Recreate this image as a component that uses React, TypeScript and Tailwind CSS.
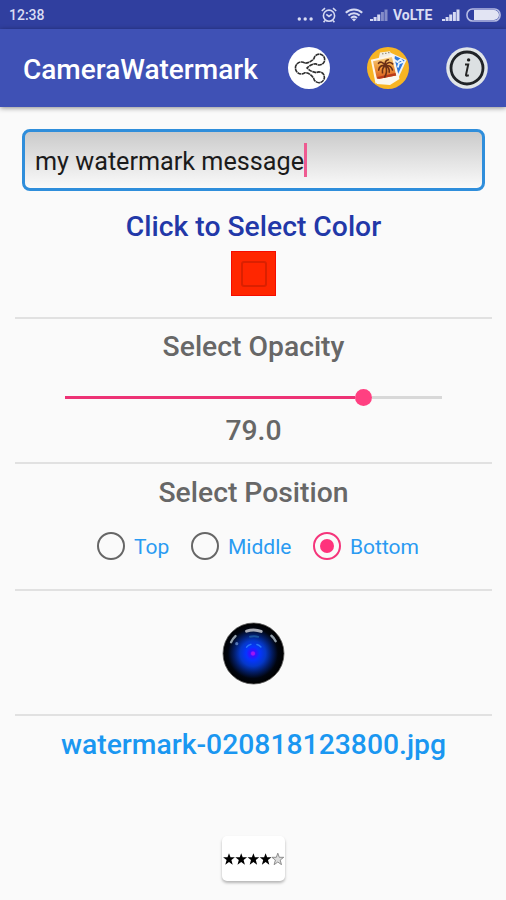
import React, { useState } from "react";

//Types
type Position = "Top" | "Middle" | "Bottom";

const positions: { name: Position; spacing: string }[] = [
  { name: "Top", spacing: "w-[94px]" },
  { name: "Middle", spacing: "w-[122px]" },
  { name: "Bottom", spacing: "w-[108px]" },
];

const STAR = "M5.5 -.2 7 3.9H11.4L7.9 6.7 9.2 11.3 5.5 8.6 1.8 11.3 3.1 6.7 -.4 3.9H4Z";

const SignalIcon = ({ weak }: { weak?: boolean }) => (
  <svg width="18" height="14" viewBox="0 0 18 14" fill="#d5d9f2">
    <path d="M0 11h3v2H0zM3.6 9h3v4h-3zM7.2 6.5h3V13h-3z" />
    <path d="M10.9 4h3v9h-3zM14.5 1.5h3V13h-3z" opacity={weak ? 0.5 : 1} />
  </svg>
);

const StatusBar = () => (
  <div className="flex h-[29px] items-center bg-[#303f9f] pt-px pr-[5px] pl-[9px] text-[#d9dcf3]">
    <span className="text-[14px] font-medium">12:38</span>
    <svg className="mt-[7px] ml-auto" width="17" height="4" viewBox="0 0 17 4" fill="#d9dcf3">
      <circle cx="2.3" cy="2" r="1.7" />
      <circle cx="8.2" cy="2" r="1.7" />
      <circle cx="14.1" cy="2" r="1.7" />
    </svg>
    <svg className="ml-[7px]" width="16" height="16" viewBox="0 0 16 16" fill="none" stroke="#d5d9f2" strokeWidth="1.6">
      <circle cx="8" cy="8.7" r="5.6" />
      <path d="M.8 4 4 1.2M12 1.2 15.2 4M5.3 7.3 8 9.4l2.8-2.1M4 13.4l-1.4 1.8M12 13.4l1.4 1.8" />
    </svg>
    <svg className="ml-[8px]" width="18" height="14" viewBox="0 0 18 14" fill="none" stroke="#d5d9f2" strokeWidth="2">
      <path d="M.8 4.8C5.4.3 12.6.3 17.2 4.8M3.4 7.4c3.2-3 8-3 11.2 0M6 10c1.8-1.6 4.2-1.6 6 0" />
      <path d="M6.9 11.2 9 13.6l2.1-2.4c-1.2-1-3-1-4.2 0Z" fill="#d5d9f2" stroke="none" />
    </svg>
    <div className="ml-[7px]"><SignalIcon weak /></div>
    <span className="ml-[5px] w-[41px] text-[14px] font-bold">VoLTE</span>
    <div className="ml-[8px]"><SignalIcon /></div>
    <svg className="ml-[6px]" width="35" height="14" viewBox="0 0 35 14">
      <rect x="1" y="1" width="33" height="12" rx="5.5" fill="none" stroke="#b6bce3" strokeWidth="1.6" />
      <path d="M8 2h20a5 5 0 0 1 0 10H8Z" fill="#e2e4f3" />
    </svg>
  </div>
);

const ShareIcon = () => (
  <svg width="42" height="42" viewBox="0 0 42 42">
    <circle cx="21" cy="21" r="21" fill="#fff" />
    <path
      d="M17.2 16.3c3.6-.7 7-2.2 8.8-4.8a5.4 5.4 0 1 1 2 5.3c-3.4 0-6.6 1.7-9 4.2 2.8 2.5 5.7 4.3 9.3 4.6a5.4 5.4 0 1 1-2.6 5.7c-2.2-3.4-5-5.4-8.6-5.6a6 6 0 1 1 .1-9.4Z"
      fill="none" stroke="#2d2d2d" strokeWidth="1.6" strokeDasharray="4 .5"
    />
  </svg>
);

const GalleryIcon = () => (
  <svg width="42" height="42" viewBox="0 0 42 42">
    <defs>
      <linearGradient id="sunset" x1="0" y1="0" x2="0" y2="1">
        <stop offset="0" stopColor="#f6cf82" />
        <stop offset=".45" stopColor="#ef9b3d" />
        <stop offset="1" stopColor="#d9571f" />
      </linearGradient>
    </defs>
    <circle cx="21" cy="21" r="21" fill="#f7b524" />
    <path d="m22 5 17.5 8-9 20-17-8Z" fill="#eef2f8" />
    <path d="m28 9 9.5 4.2L30.6 28 23 25Z" fill="#2e78dc" />
    <path d="m27 12.5 3.5 2.5 3-2.5 2.5 2.6-4 1.3-1.2 4" fill="none" stroke="#e7f4ff" strokeWidth="1.8" />
    <path d="m13 5.5 10-1.2 2 8-14 2Z" fill="#f3eee3" />
    <path d="M15 6.8h1.5M18 6.3h1.5M21 5.7h1.5" stroke="#8b806c" />
    <path d="m3.8 12.7 22.8-5.3L32.2 31 8.5 36.5Z" fill="#fff5e6" />
    <path d="m6 14.3 18.9-4.4 4.3 18.5L10 32.3Z" fill="url(#sunset)" />
    <path d="m10.5 30 18-4 .7 2.4L10 32.3Z" fill="#b93a1a" />
    <path
      d="M18.7 19c1.3 3.7.9 7.7-1 11M18.5 18.5c-2.8-4-5.4-4-7-2.2M18.5 18.5c-4.2-.6-6.4 1-6.8 4.6M18.5 18.5c-2.6 1.8-3.6 4-3 7.3M18.5 18.5c-1-3.4.5-5.3 2.8-5.8M18.5 18.5c2.2-3.6 5-3.7 7.2-1.6M18.5 18.5c4-.4 6 .9 7 4.5M18.5 18.5c3.2 1.8 4.2 3.9 3.7 6.7"
      fill="none" stroke="#6b2f16" strokeWidth="1.6" strokeLinecap="round"
    />
    <path d="m8.5 31.5 6 .8 7-1.5 10-2 1 3.2-9.5 6-13-1Z" fill="#faf7ee" />
  </svg>
);

const InfoIcon = () => (
  <svg width="42" height="42" viewBox="0 0 42 42">
    <circle cx="21" cy="21" r="20.8" fill="#e1e5e8" />
    <circle cx="21" cy="21" r="16" fill="#dce0e2" stroke="#202327" strokeWidth="2.8" />
    <circle cx="22.6" cy="12.9" r="1.7" fill="#1c1c1c" />
    <path d="M19 17.6h3.2l-2.2 10.3q-.2 1.3 2.8.4" fill="none" stroke="#252525" strokeWidth="2" />
  </svg>
);

const LensIcon = () => (
  <svg width="63" height="63" viewBox="0 0 64 64">
    <defs>
      <radialGradient id="lens" cx=".49" cy=".5" r=".5">
        <stop offset="0" stopColor="#8b18ff" />
        <stop offset=".1" stopColor="#3510ff" />
        <stop offset=".22" stopColor="#0535ff" />
        <stop offset=".42" stopColor="#0538c8" />
        <stop offset=".63" stopColor="#031c62" />
        <stop offset=".82" stopColor="#01050f" />
        <stop offset="1" stopColor="#000" />
      </radialGradient>
    </defs>
    <circle cx="32" cy="32" r="31" fill="url(#lens)" stroke="#606060" strokeWidth=".8" />
    <g fill="none" strokeLinecap="round">
      <path d="M25 9.3c5-1.7 10-1.5 14.8 .3" stroke="#a9adb8" strokeWidth="3" />
      <path d="M9.2 20.5c1.2-2.6 2.6-4.5 4.5-6.2M50.2 14c2 1.6 3.3 3.4 4.3 5.5" stroke="#929faa" strokeWidth="2.4" />
      <path d="M28.5 15c2.8-.8 5.6-.7 8.2 .1" stroke="#1c559e" strokeWidth="2" />
      <path d="M25 25.5c1.2-1.6 2.6-2.4 4.3-2.8M35.5 22.8c1.8.5 3 1.3 4 2.6" stroke="#2977f7" strokeWidth="1.5" />
    </g>
    <circle cx="15" cy="22" r="1.6" fill="#5577b7" />
    <circle cx="31.5" cy="32" r="2" fill="#9f16f2" />
  </svg>
);

const Divider = () => <div className="h-[2px] w-full shrink-0 bg-[#e1e1e1]" />;

const App: React.FC = (): React.ReactElement => {

  const [position, setPosition] = useState<Position>("Bottom");
  const opacity = 79;

  return (
    <div className="flex h-[900px] w-[506px] flex-col overflow-hidden bg-[#fafafa] font-['Roboto',sans-serif]">
      <StatusBar />
      <header className="flex h-[78px] shrink-0 items-center bg-[#3f51b5] pr-[18px] pl-[23px] shadow-[0_1px_5px_rgba(0,0,0,0.45)]">
        <h1 className="mt-[3px] text-[28px] font-medium whitespace-nowrap text-white">CameraWatermark</h1>
        <div className="ml-auto flex gap-[37px]">
          <button><ShareIcon /></button>
          <button><GalleryIcon /></button>
          <button><InfoIcon /></button>
        </div>
      </header>

      <main className="flex flex-1 flex-col items-center pr-[14px] pl-[15px]">
        <div className="mt-[22px] flex h-[62px] w-[463px] shrink-0 items-center rounded-[8px] border-[3.5px] border-[#2f8edb] bg-linear-to-b from-[#cbcbcb] to-[#fafafa] pl-[10px]">
          <span className="mt-[3px] text-[25.2px] whitespace-nowrap text-[#1b1b1b]">my watermark message</span>
          <span className="h-[34px] w-[3px] bg-[#ee5b91]" />
        </div>

        <h2 className="mt-[18px] h-9 text-[28.3px] leading-9 font-medium text-[#2238a8]">Click to Select Color</h2>
        <button className="mt-[6px] flex size-[45px] shrink-0 items-center justify-center border border-[#f50c00] bg-[#ff2600]">
          <span className="size-[26px] rounded-[3px] border-2 border-[#db2000]" />
        </button>
        <div className="mt-[21px] w-full"><Divider /></div>

        <h2 className="mt-[10px] h-9 text-[28.3px] leading-9 font-medium text-[#676767]">Select Opacity</h2>
        <div className="mt-[20px] flex h-6 w-[377px] items-center">
          <div className="h-[3px] bg-[#ed3275]" style={{ width: `${opacity - 2.2}%` }} />
          <div className="size-[17px] shrink-0 rounded-full bg-[#ff4081]" />
          <div className="h-[3px] flex-1 bg-[#d8d8d8]" />
        </div>
        <p className="mt-[4px] h-9 text-[28.3px] leading-9 font-medium text-[#676767]">{opacity.toFixed(1)}</p>
        <div className="mt-[13px] w-full"><Divider /></div>

        <h2 className="mt-[11px] h-9 text-[28.3px] leading-9 font-medium text-[#676767]">Select Position</h2>
        <div className="mt-[21px] flex h-7 w-[313px] items-center justify-start">
          {
            positions.map(({ name, spacing }) => (
              <button key={name} className={`flex shrink-0 items-center ${spacing}`} onClick={() => setPosition(name)}>
                <span className={`mr-[9px] flex size-7 items-center justify-center rounded-full border-[2.5px] ${position === name ? "border-[#f5357b]" : "border-[#666666]"}`}>
                  {position === name && <span className="size-[14px] rounded-full bg-[#ff337c]" />}
                </span>
                <span className="mt-px text-[21px] leading-7 text-[#2a9bf2]">{name}</span>
              </button>
            ))
          }
        </div>
        <div className="mt-[29px] w-full"><Divider /></div>

        <button className="mt-[31px] h-[63px]"><LensIcon /></button>
        <div className="mt-[29px] w-full"><Divider /></div>

        <p className="mt-[11px] h-9 text-[28.3px] leading-9 font-medium text-[#1a97f1]">watermark-020818123800.jpg</p>
        <button className="mt-[73px] flex h-[45px] w-[63px] shrink-0 items-center justify-center rounded-[5px] bg-white shadow-[0_2px_3px_rgba(0,0,0,0.28)]">
          <svg width="61" height="12" viewBox="0 0 61 12">
            {[0, 1, 2, 3, 4].map((i) => (
              <path key={i} d={STAR} transform={`translate(${i * 12.2 + 0.5} .4)`} fill={i < 4 ? "#000" : "#ddd"} stroke={i < 4 ? "none" : "#777"} strokeWidth=".8" />
            ))}
          </svg>
        </button>
      </main>
    </div>
  );
};

export default App;
